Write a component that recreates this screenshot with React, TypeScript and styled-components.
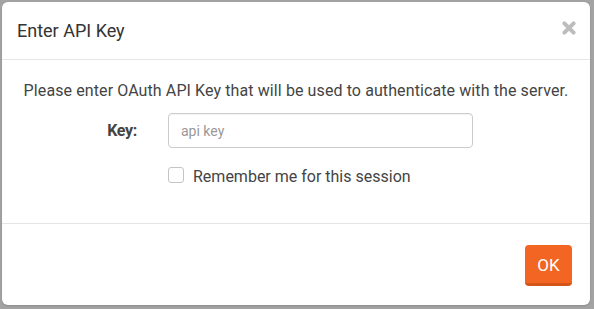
import React from 'react';
import styled, { createGlobalStyle } from 'styled-components';

const GlobalStyle = createGlobalStyle`
  html, body {
    margin: 0;
    padding: 0;
    background: #a3a3a3;
    font-family: Roboto, "Liberation Sans", Arial, sans-serif;
  }
  * { box-sizing: border-box; }
`;

const Backdrop = styled.div`
  width: 594px;
  height: 309px;
  padding: 2px 4px 4px 2px;
`;

const Modal = styled.div`
  width: 588px;
  height: 303px;
  background: #fff;
  border-radius: 6px;
  display: flex;
  flex-direction: column;
  box-shadow: 0 1px 2px rgba(0, 0, 0, 0.15);
`;

const Header = styled.div`
  display: flex;
  align-items: center;
  justify-content: space-between;
  padding: 16px 14px 15px 15px;
  border-bottom: 1px solid #e5e5e5;
`;

const Title = styled.h4`
  margin: 0;
  font-size: 18px;
  font-weight: 400;
  line-height: 26px;
  color: #333;
`;

const CloseButton = styled.button`
  border: 0;
  background: none;
  padding: 0;
  width: 14px;
  height: 14px;
  display: flex;
  cursor: pointer;
  margin-top: -6px;
`;

const Body = styled.div`
  flex: 1;
  padding: 20px 15px 0;
  display: flex;
  flex-direction: column;
`;

const Description = styled.p`
  margin: 0;
  font-size: 16px;
  line-height: 22px;
  letter-spacing: 0.1px;
  color: #444;
  text-align: center;
`;

const FormRow = styled.div<{ $top: number }>`
  display: grid;
  grid-template-columns: 120px 305px;
  column-gap: 31px;
  align-items: center;
  margin-top: ${(p) => p.$top}px;
`;

const Label = styled.label`
  text-align: right;
  font-size: 16px;
  font-weight: 700;
  letter-spacing: -0.3px;
  color: #444;
`;

const Input = styled.input`
  height: 35px;
  width: 100%;
  border: 1px solid #ccc;
  border-radius: 4px;
  padding: 0 12px;
  font-family: inherit;
  font-size: 14px;
  color: #555;
  box-shadow: inset 0 1px 1px rgba(0, 0, 0, 0.05);
  outline: none;
  &::placeholder {
    color: #999;
  }
`;

const CheckLabel = styled.label`
  grid-column: 2;
  display: flex;
  align-items: center;
  gap: 9px;
  font-size: 16px;
  line-height: 22px;
  color: #444;
`;

const Box = styled.span`
  width: 16px;
  height: 16px;
  border: 1px solid #c4c4c4;
  border-radius: 3px;
  background: #fff;
  margin-top: -4px;
`;

const Footer = styled.div`
  display: flex;
  justify-content: flex-end;
  padding: 21px 18px 19px;
  border-top: 1px solid #e5e5e5;
`;

const OkButton = styled.button`
  width: 47px;
  height: 41px;
  border: 0;
  border-bottom: 3px solid #d4541a;
  border-radius: 4px;
  background: #f26522;
  color: #fff;
  font-family: inherit;
  font-size: 17px;
  padding: 2px 0 0;
  cursor: pointer;
`;

const CloseIcon = () => (
  <svg width="14" height="14" viewBox="0 0 14 14">
    <path
      d="M2.4 2.4 L11.6 11.6 M11.6 2.4 L2.4 11.6"
      stroke="#bdbdbd"
      strokeWidth="4"
      strokeLinecap="round"
    />
  </svg>
);

export default function App() {
  return (
    <>
      <GlobalStyle />
      <Backdrop>
        <Modal>
          <Header>
            <Title>Enter API Key</Title>
            <CloseButton aria-label="Close">
              <CloseIcon />
            </CloseButton>
          </Header>
          <Body>
            <Description>
              Please enter OAuth API Key that will be used to authenticate with the server.
            </Description>
            <FormRow $top={11}>
              <Label htmlFor="apikey">Key:</Label>
              <Input id="apikey" placeholder="api key" />
            </FormRow>
            <FormRow $top={18}>
              <CheckLabel>
                <Box />
                Remember me for this session
              </CheckLabel>
            </FormRow>
          </Body>
          <Footer>
            <OkButton>OK</OkButton>
          </Footer>
        </Modal>
      </Backdrop>
    </>
  );
}
